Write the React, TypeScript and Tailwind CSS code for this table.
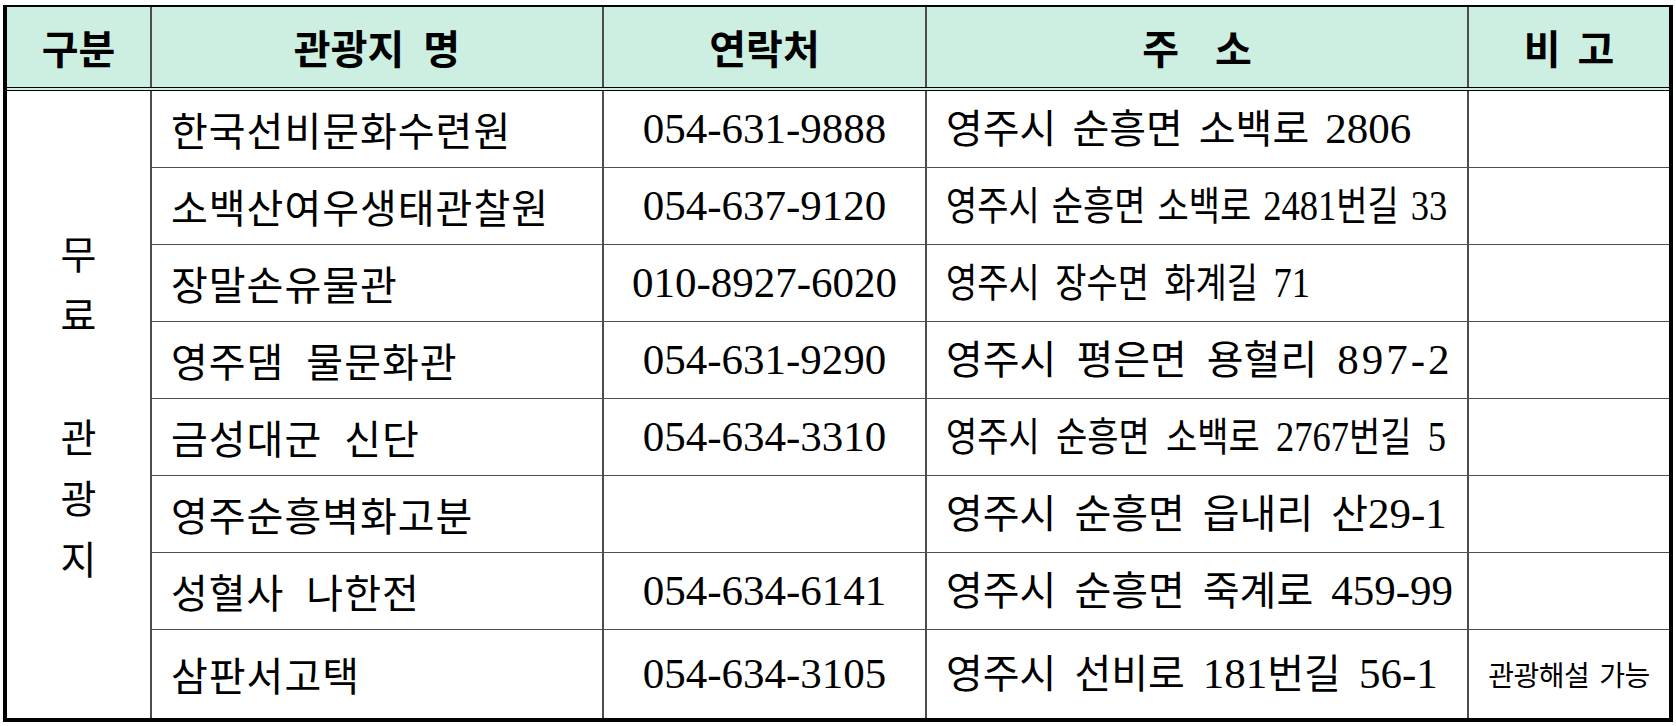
import React from "react";

type Word = { t: string; c?: string };
type Row = {
  name: string;
  phone: string;
  addr: Word[];
  addrCls: string;
  note: string;
};

const w = (t: string, c?: string): Word => ({ t, c });

const rows: Row[] = [
  { name: "한국선비문화수련원", phone: "054-631-9888", addr: [w("영주시"), w("순흥면"), w("소백로"), w("2806")], addrCls: "gap-[16px]", note: "" },
  { name: "소백산여우생태관찰원", phone: "054-637-9120", addr: [w("영주시"), w("순흥면"), w("소백로"), w("2481번길"), w("33")], addrCls: "gap-[14px] scale-x-[0.85]", note: "" },
  { name: "장말손유물관", phone: "010-8927-6020", addr: [w("영주시"), w("장수면"), w("화계길"), w("71")], addrCls: "gap-[18px] scale-x-[0.85]", note: "" },
  { name: "영주댐 물문화관", phone: "054-631-9290", addr: [w("영주시"), w("평은면"), w("용혈리"), w("897-2", "tracking-[3px]")], addrCls: "gap-[20px]", note: "" },
  { name: "금성대군 신단", phone: "054-634-3310", addr: [w("영주시"), w("순흥면"), w("소백로"), w("2767번길"), w("5")], addrCls: "gap-[19px] scale-x-[0.85]", note: "" },
  { name: "영주순흥벽화고분", phone: "", addr: [w("영주시"), w("순흥면"), w("읍내리"), w("산29-1")], addrCls: "gap-[18px]", note: "" },
  { name: "성혈사 나한전", phone: "054-634-6141", addr: [w("영주시"), w("순흥면"), w("죽계로"), w("459-99")], addrCls: "gap-[18px]", note: "" },
  { name: "삼판서고택", phone: "054-634-3105", addr: [w("영주시"), w("선비로"), w("181번길"), w("56-1")], addrCls: "gap-[18px]", note: "관광해설 가능" },
];

function Mixed({ text }: { text: string }) {
  const parts = text.split(/([0-9-]+)/).filter((p) => p.length > 0);
  return (
    <>
      {parts.map((p, i) =>
        /^[0-9-]+$/.test(p) ? (
          <span key={i} className="font-['Liberation_Serif',serif] text-[43px]">
            {p}
          </span>
        ) : (
          <span key={i}>{p}</span>
        )
      )}
    </>
  );
}

const cellBorder = "border-r-2 border-[#4d4d4d]";

export default function App() {
  return (
    <div className="bg-white w-[1676px] h-[726px] pt-[5px] pl-[3px] font-['Noto_Sans_CJK_KR',sans-serif] text-black">
      <div className="w-[1670px] border-4 border-t-2 border-black">
        {/* Header */}
        <div className="grid grid-cols-[145px_452px_323px_542px_200px] h-[84px] bg-[#ccefe1] border-b-4 border-double border-black text-[40px] font-bold leading-none">
          <div className={`flex items-center justify-center ${cellBorder}`}>구분</div>
          <div className={`flex items-center justify-center ${cellBorder} [word-spacing:10px]`}>관광지 명</div>
          <div className={`flex items-center justify-center ${cellBorder}`}>연락처</div>
          <div className={`flex items-center justify-center gap-[36px] ${cellBorder}`}>
            <span>주</span>
            <span>소</span>
          </div>
          <div className="flex items-center justify-center gap-[17px]">
            <span>비</span>
            <span>고</span>
          </div>
        </div>
        {/* Body */}
        <div className="flex">
          <div className={`w-[145px] shrink-0 flex flex-col items-center justify-center text-[39px] leading-[61px] ${cellBorder}`}>
            <span>무</span>
            <span>료</span>
            <span>&nbsp;</span>
            <span>관</span>
            <span>광</span>
            <span>지</span>
          </div>
          <div className="flex flex-col w-[1517px]">
            {rows.map((r, i) => (
              <div
                key={i}
                className={`grid grid-cols-[452px_323px_542px_200px] ${
                  i === rows.length - 1 ? "h-[88px]" : "h-[77px] border-b border-[#4d4d4d]"
                }`}
              >
                <div className={`flex items-center pl-[19px] text-[40px] tracking-[1px] [word-spacing:12px] whitespace-nowrap ${cellBorder}`}>
                  {r.name}
                </div>
                <div className={`flex items-center justify-center font-['Liberation_Serif',serif] text-[43px] ${cellBorder}`}>
                  {r.phone}
                </div>
                <div className={`flex items-center pl-[19px] ${cellBorder}`}>
                  <div className={`flex items-baseline whitespace-nowrap origin-left text-[40px] ${r.addrCls}`}>
                    {r.addr.map((x, j) => (
                      <span key={j} className={x.c}>
                        <Mixed text={x.t} />
                      </span>
                    ))}
                  </div>
                </div>
                <div className="flex items-center justify-center text-[28px] tracking-[-0.5px] [word-spacing:4px] whitespace-nowrap">
                  {r.note}
                </div>
              </div>
            ))}
          </div>
        </div>
      </div>
    </div>
  );
}
